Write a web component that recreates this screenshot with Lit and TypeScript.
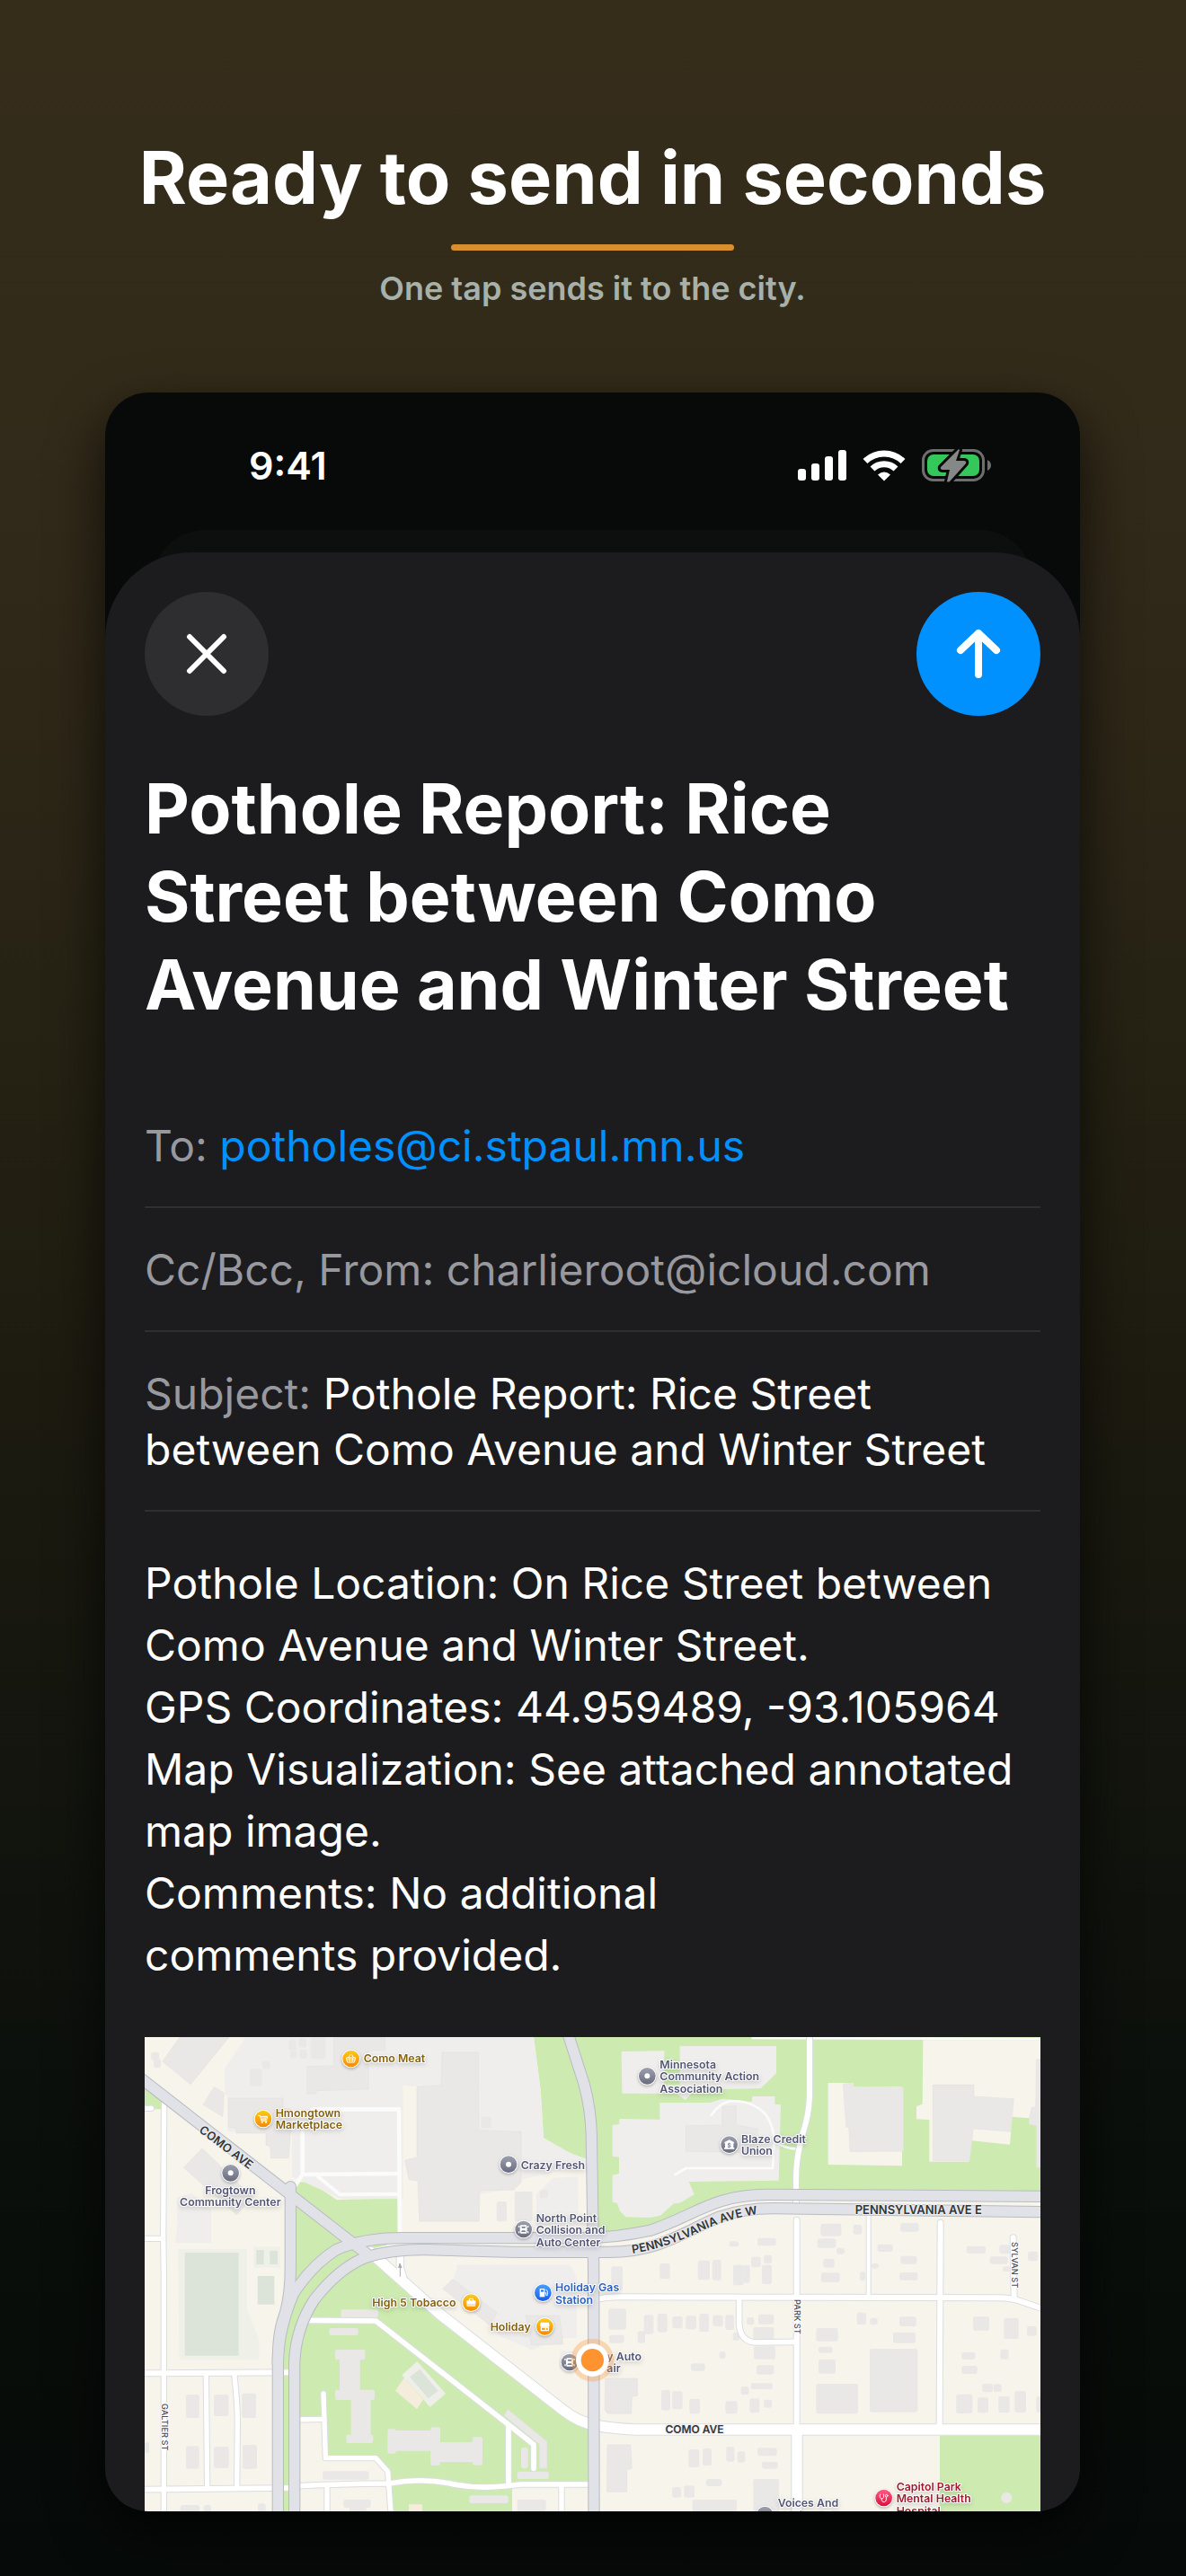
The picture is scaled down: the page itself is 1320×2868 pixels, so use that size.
import { LitElement, html, svg, css } from "lit";
import { customElement } from "lit/decorators.js";

type Box = [number, number, number, number];

/* Map drawing units: three per displayed pixel at full width. */

const footprints: Box[] = [
  // north-west blocks
  [554, 0, 50, 73], [352, 106, 40, 58], [392, 80, 26, 26], [22, 50, 26, 28], [30, 72, 24, 30],
  [481, 8, 24, 36], [514, 4, 26, 30], [486, 46, 22, 24], [518, 42, 24, 30],
  [1124, 266, 33, 38], [1235, 516, 60, 100], [1175, 549, 34, 67], [1319, 510, 28, 28],
  // west blocks
  [138, 1194, 44, 78], [231, 1194, 49, 72], [325, 1190, 47, 82], [138, 1366, 44, 76],
  [231, 1368, 50, 72], [327, 1362, 48, 80], [0, 1354, 15, 36],
  [655, 910, 125, 26], [616, 972, 97, 24], [594, 1450, 155, 28], [119, 1563, 64, 30],
  [197, 1563, 25, 30], [378, 1558, 26, 30], [664, 1544, 91, 28], [684, 1560, 56, 30],
  // park housing
  [636, 1044, 100, 34], [651, 1056, 68, 140], [636, 1178, 132, 34], [689, 1186, 66, 160],
  [673, 1328, 90, 28], [811, 1309, 28, 82], [817, 1314, 170, 68], [955, 1303, 32, 128],
  [955, 1353, 172, 66], [1095, 1335, 33, 95], [1257, 1371, 23, 69], [1244, 1451, 106, 25],
  [1084, 1531, 130, 26], [1244, 1544, 96, 40],
  // east of the avenue
  [1548, 907, 60, 70], [1551, 995, 50, 27], [1667, 928, 32, 64], [1646, 982, 25, 40],
  [1712, 924, 33, 62], [1762, 933, 34, 40], [1807, 931, 35, 45], [1852, 924, 32, 60],
  [1897, 929, 34, 37], [1939, 928, 29, 50], [1964, 987, 22, 27], [1919, 1050, 21, 24],
  [1824, 1090, 47, 25], [1992, 1168, 20, 27], [1725, 1179, 30, 68], [1761, 1183, 35, 60],
  [1819, 1208, 35, 50], [1939, 1216, 40, 42], [1816, 1377, 36, 60], [1863, 1374, 30, 57],
  [1942, 1368, 27, 50], [1979, 1384, 26, 37], [1875, 1476, 52, 24], [1761, 1503, 30, 35],
  [1801, 1498, 35, 40], [1829, 1545, 148, 39],
  [1558, 766, 38, 80], [1720, 756, 34, 52], [1847, 746, 40, 65], [1895, 744, 30, 68],
  [1965, 761, 35, 68], [1952, 682, 32, 18],
  // north-east blocks
  [2257, 623, 69, 42], [2366, 627, 29, 32], [2246, 673, 62, 31], [2310, 704, 27, 21],
  [2266, 740, 37, 30], [2259, 787, 62, 32], [2046, 671, 62, 26], [2025, 734, 32, 35],
  [2067, 728, 27, 28], [2061, 761, 33, 64], [1999, 761, 22, 60], [2447, 692, 51, 25],
  [2524, 621, 61, 29], [2524, 731, 54, 27], [2521, 786, 60, 26], [2427, 756, 24, 17],
  [2388, 784, 18, 30], [2744, 698, 64, 25], [2854, 694, 36, 30], [2822, 733, 60, 25],
  [2865, 766, 25, 17], [2949, 716, 34, 32],
  // east blocks
  [2010, 936, 25, 25], [2049, 926, 52, 33], [2032, 969, 69, 42], [2034, 1033, 72, 43],
  [2043, 1096, 58, 31], [2024, 1156, 73, 20], [1991, 1168, 27, 26], [2020, 1207, 33, 48],
  [2067, 1211, 27, 27], [2242, 972, 73, 44], [2250, 1034, 47, 21], [2250, 1076, 57, 48],
  [2242, 1158, 140, 100], [2378, 920, 31, 40], [2422, 938, 25, 23], [2520, 934, 56, 32],
  [2499, 986, 75, 36], [2421, 1041, 160, 212], [2766, 934, 54, 46], [2869, 938, 49, 70],
  [2946, 966, 32, 32], [2728, 1052, 45, 25], [2728, 1098, 52, 27], [2857, 1043, 28, 33],
  [2797, 1157, 35, 29], [2834, 1159, 27, 26], [2710, 1193, 54, 64], [2781, 1204, 36, 51],
  [2851, 1200, 37, 54], [2905, 1182, 38, 72], [2977, 1200, 15, 54], [2046, 1372, 65, 27],
  [2061, 1418, 53, 24], [2032, 1476, 86, 110],
];

const buildingShapes = [
  "117,0 282,0 154,158 59,82",
  "232,166 265,186 261,266 195,226",
  "632,0 802,0 802,44 747,46 747,174 574,179 572,189 542,189 542,98 632,96",
  "280,204 462,204 462,238 487,240 487,326 481,404 421,404 419,366 405,361 405,321 305,321 303,302 280,301",
  "192,371 362,536 307,593 130,436",
  "909,166 989,161 993,51 1115,51 1115,311 1257,316 1257,486 1232,511 1119,511 1117,616 917,616 912,481 882,476 869,411 909,401",
  "1212,1243 1344,1351 1344,1441 1318,1441 1318,1361 1200,1264",
  "1029,808 1177,921 1152,961 995,841",
  "1272,931 1385,931 1397,1026 1292,1029",
  "1538,1140 1645,1140 1645,1198 1627,1201 1625,1258 1547,1258 1536,1246",
  "1545,1362 1623,1362 1627,1441 1610,1446 1610,1519 1543,1519",
  "2332,156 2365,154 2367,166 2534,168 2534,381 2355,383 2351,301 2342,301",
  "2632,159 2769,159 2769,198 2902,206 2892,316 2767,306 2755,413 2632,413",
  "2977,74 2991,74 2991,436 2977,436 2977,296 2952,291 2952,276 2962,234 2975,234",
  "1807,296 1929,294 1929,231 1975,231 1975,294 2047,306 2047,386 1807,382",
];

const lots = [
  "337,0 862,0 862,541 657,541 492,466 492,321 277,316 277,196 267,194 267,106",
  "862,0 1299,0 1322,176 1332,336 1419,386 1484,410 1484,425 1257,476 1200,511 917,560 912,166 862,161",
  "109,536 157,521 222,576 222,688 102,688 109,626",
  "1307,526 1362,471 1447,466 1447,631 1307,631",
  "1045,760 1419,760 1442,800 1442,1005 1390,1005 1292,1045 1190,1000 1020,850",
  "1387,1048 1450,1048 1450,1110 1387,1110",
  "1720,219 1887,219 1930,206 2027,216 2029,198 2104,198 2104,224 2124,226 2117,479 1817,483 1835,526 1787,554 1767,556 1722,596 1687,603 1607,601 1587,581 1577,554 1562,551 1562,461 1584,456 1584,401 1562,398 1562,294 1585,291 1585,273 1720,275",
  "1592,48 1735,46 1735,160 1787,160 1787,30 2109,30 2109,121 2057,171 1837,176 1805,211 1777,189 1594,188",
];

const parks = [
  "0,170 57,213 57,241 0,241",
  "1299,0 1417,0 1467,156 1490,276 1492,406 1419,408 1419,386 1367,376 1332,336 1322,176",
  "1417,0 2991,0 2991,532 2077,526 1837,590 1687,650 1510,660 1497,476 1490,276 1467,156",
  "445,1584 445,1036 480,900 487,500 507,484 552,484 642,544 845,538 845,660 760,740 1397,1246 1490,1300 1490,1494 1257,1494 1227,1500 1227,1584",
  "2655,1331 2991,1331 2991,1584 2655,1584",
];

const clearings = [
  "2599,10 2991,10 2991,274 2897,266 2889,359 2762,346 2752,416 2620,416 2620,276 2577,274 2577,231 2597,224",
  "2282,153 2367,153 2367,166 2529,166 2529,430 2282,426",
  "517,1282 597,1282 604,1411 772,1411 817,1466 827,1584 517,1584",
  "730,712 850,688 1000,688 850,702 745,722",
];

/* Minor streets: [width, path] */
const streets: [number, string][] = [
  [16, "M65 200 62 666 64 786V1600"],
  [16, "M-9 238H22"],
  [16, "M-9 673H62"],
  [18, "M-9 1123 482 1120"],
  [17, "M-9 1511 482 1506"],
  [17, "M500 1500Q640 1492 817 1491Q917 1472 1017 1490Q1100 1510 1200 1500L1257 1494H1500"],
  [16, "M205 1123 209 1508"],
  [16, "M299 1123Q310 1230 310 1280L308 1508"],
  [16, "M597 1191 604 1406H772L812 1451 823 1600"],
  [16, "M500 1278 600 1276"],
  [16, "M609 1500V1600"],
  [17, "M530 946 772 948 1217 1296 1299 1361V1441"],
  [17, "M1215 1301V1490"],
  [16, "M1392 1500V1600"],
  [18, "M1500 878Q1540 868 1580 868L2850 871Q2890 870 2930 884L3000 908"],
  [17, "M1985 876V960Q1990 1020 2045 1020L2177 1018"],
  [18, "M2177 611V1300"],
  [12, "M2417 580V871"],
  [18, "M2657 620 2654 1300"],
  [18, "M2900 670 2903 871"],
  [18, "M2220 0V200Q2218 260 2198 320Q2175 400 2175 470V570"],
  [34, "M2178 1311V1600"],
  [34, "M752 718 987 926 1397 1246Q1450 1288 1510 1298T1640 1311H3000"],
  [22, "M853 720V770L862 800"],
];

const lanes: [number, string][] = [
  [14, "M560 241H849L852 660"],
  [14, "M852 456 527 459 500 500M527 459V320"],
  [12, "M577 464 652 526 850 524"],
  [8, "M1892 261Q1920 220 1955 214Q2030 210 2075 260Q2102 300 2102 350L2097 438H1807L1772 459"],
  [8, "M2102 350Q2140 372 2177 374"],
  [8, "M2030 3 2991 6"],
];

const highways = [
  "M-20 132 697 690 740 722",
  "M487 500V770Q487 880 460 950Q445 1000 445 1090V1600",
  "M445 1090Q445 980 497 856Q560 760 640 710Q730 671 860 671H1430Q1560 674 1687 646C1830 600 1900 525 2080 526L3000 532",
  "M500 1600V1086Q505 970 567 876Q650 770 740 735Q830 708 940 710L1237 718H1550C1720 718 1800 650 1920 600Q2000 572 2100 572L3000 584",
  "M1410 -20 1417 0 1467 156Q1490 240 1492 330L1499 780 1500 1600",
];

type Tone = "shop" | "place" | "fuel" | "care";

interface Poi {
  tone: Tone;
  glyph: string;
  cx: number;
  cy: number;
  x: number;
  y: number;
  anchor?: "middle";
  lines: string[];
}

const pois: Poi[] = [
  { tone: "shop", glyph: "basket", cx: 689, cy: 72, x: 731, y: 84, lines: ["Como Meat"] },
  { tone: "shop", glyph: "cart", cx: 396, cy: 273, x: 437, y: 267, lines: ["Hmongtown", "Marketplace"] },
  { tone: "place", glyph: "dot", cx: 287, cy: 454, x: 286, y: 525, anchor: "middle", lines: ["Frogtown", "Community Center"] },
  { tone: "place", glyph: "dot", cx: 1678, cy: 130, x: 1720, y: 105, lines: ["Minnesota", "Community Action", "Association"] },
  { tone: "place", glyph: "bank", cx: 1952, cy: 359, x: 1992, y: 354, lines: ["Blaze Credit", "Union"] },
  { tone: "place", glyph: "dot", cx: 1215, cy: 425, x: 1256, y: 440, lines: ["Crazy Fresh"] },
  { tone: "place", glyph: "car", cx: 1265, cy: 642, x: 1307, y: 618, lines: ["North Point", "Collision and", "Auto Center"] },
  { tone: "shop", glyph: "bag", cx: 1090, cy: 887, x: 760, y: 901, lines: ["High 5 Tobacco"] },
  { tone: "fuel", glyph: "pump", cx: 1330, cy: 854, x: 1371, y: 850, lines: ["Holiday Gas", "Station"] },
  { tone: "shop", glyph: "store", cx: 1336, cy: 967, x: 1154, y: 981, lines: ["Holiday"] },
  { tone: "place", glyph: "car", cx: 1419, cy: 1086, x: 1543, y: 1080, lines: ["y Auto", "air"] },
  { tone: "place", glyph: "dot", cx: 2071, cy: 1596, x: 2114, y: 1570, lines: ["Voices And", "Choices For"] },
  { tone: "care", glyph: "scope", cx: 2468, cy: 1539, x: 2510, y: 1515, lines: ["Capitol Park", "Mental Health", "Hospital"] },
];

const glyphs: Record<string, unknown> = {
  dot: svg`<circle r="9" fill="#fff"/>`,
  basket: svg`<g fill="none" stroke="#fff" stroke-width="3" stroke-linejoin="round" stroke-linecap="round"><path d="M-15 -3H15L11 12H-11ZM-8 -4-3 -13M8 -4 3 -13M-13 4H13M-5 -2-4 11M5 -2 4 11"/></g>`,
  cart: svg`<g fill="none" stroke="#fff" stroke-width="3" stroke-linejoin="round" stroke-linecap="round"><path d="M-16 -11H-11L-6 7H12M-10 -8H14L11 3H-7M-4 -7-2 2M3 -7V2M9 -7 8 2"/></g><circle cx="-4" cy="12" r="3" fill="#fff"/><circle cx="9" cy="12" r="3" fill="#fff"/>`,
  bank: svg`<path d="M0 -16 16 -8V-4H-16V-8ZM-14 -4H14V10H17V15H-17V10H-14Z" fill="#fff"/><text class="coin" y="10" text-anchor="middle">$</text>`,
  car: svg`<path d="M-10 -14H10L12 -6V6L10 14H-10L-12 6V-6Z" fill="#fff"/><path d="M-7 -9H7L5 -4H-5ZM-8 9H8L5 4H-5Z" fill="#7b7f90"/><path d="M-15 -12V-6M15 -12V-6M-15 7V13M15 7V13" stroke="#fff" stroke-width="4"/>`,
  bag: svg`<rect x="-15" y="-7" width="30" height="19" rx="3" fill="#fff"/><path d="M-6 -7V-13H6V-7" fill="none" stroke="#fff" stroke-width="3"/><path d="M-15 7H15" stroke="#f9a90a" stroke-width="2"/>`,
  pump: svg`<path d="M-11 -14H6V14H-11Z" fill="#fff"/><path d="M-7 -10H2V-3H-7Z" fill="#2e7cf0"/><path d="M6 0H10V8Q14 12 15 7V-5L10 -11" fill="none" stroke="#fff" stroke-width="3"/>`,
  store: svg`<path d="M-13 -14H13L16 -4Q14 1 10 -1Q5 2 0 -1Q-5 2-10 -1Q-14 1-16 -4Z" fill="#fff"/><path d="M-12 2H12V13H-12Z" fill="none" stroke="#fff" stroke-width="4"/><path d="M3 3V12" stroke="#fff" stroke-width="4"/>`,
  scope: svg`<g fill="none" stroke="#fff" stroke-width="3" stroke-linecap="round"><path d="M-12 -12Q-16 2-7 3Q3 2-1 -12M-7 3Q-8 15 2 14Q10 12 8 -2"/><circle cx="9" cy="-7" r="4"/></g>`,
};

@customElement("report-map")
export class ReportMap extends LitElement {
  static styles = css`
    :host { display: block; }
    .map { display: block; width: 100%; height: auto; background: #f7f4eb; }
    .map text { font-family: Inter, "Liberation Sans", sans-serif; font-weight: 600; font-size: 37px; paint-order: stroke; stroke: #fff; stroke-width: 6px; stroke-linejoin: round; }
    .map .road { font-size: 36px; fill: #343537; stroke: #eceef0; }
    .map .avenue { font-size: 39px; }
    .map .side { font-size: 28px; font-weight: 500; fill: #4c4e52; }
    .map .coin { font-size: 20px; font-weight: 700; fill: #7b7f90; stroke: none; }
    .shop { fill: #85600f; }
    .place { fill: #525674; }
    .fuel { fill: #2b5fc4; }
    .care { fill: #a3172d; }
    .pin { filter: drop-shadow(0 4px 5px #0004); }
    .label { filter: drop-shadow(0 6px 8px #0002); }
  `;

  render() {
    const line = (width: number, color: string) => ([w, d]: [number, string]) =>
      svg`<path d=${d} fill="none" stroke=${color} stroke-width=${w + width} stroke-linejoin="round" stroke-linecap="round"/>`;
    const shape = (color: string) => (points: string) => svg`<polygon points=${points} fill=${color}/>`;
    return html`
      <svg class="map" viewBox="0 0 2991 1584" role="img" aria-label="Map of the pothole location">
        <defs>
          <linearGradient id="shop" x2="0" y2="1"><stop stop-color="#fccb1a"/><stop offset="1" stop-color="#f58a05"/></linearGradient>
          <linearGradient id="place" x2="0" y2="1"><stop stop-color="#9da1ae"/><stop offset="1" stop-color="#686c7e"/></linearGradient>
          <linearGradient id="fuel" x2="0" y2="1"><stop stop-color="#46a0ff"/><stop offset="1" stop-color="#1a5ce4"/></linearGradient>
          <linearGradient id="care" x2="0" y2="1"><stop stop-color="#ff5c86"/><stop offset="1" stop-color="#d8103c"/></linearGradient>
          <path id="avenue-west" d="M1629 723Q1740 705 1850 652T2080 587"/>
        </defs>
        ${parks.map(shape("#cdebb0"))}
        ${clearings.map(shape("#f7f4eb"))}
        ${lots.map(shape("#efeeec"))}
        <path d="M112 708H342V910L382 1010V1078H116ZM364 700H454V770H364Z" fill="#eff0e8"/>
        <path d="M134 720H314V1064H134ZM373 711H398V759H373ZM418 714H444V759H418ZM377 798H433V893H377Z" fill="#dce4da"/>
        <path d="M867 1138 930 1211 909 1243 837 1181ZM882 1561H927V1584H882Z" fill="#f5eddb"/>
        <path d="M910 1083 1005 1191 953 1236 859 1129Z" fill="#efefe9"/>
        <path d="M919 1109 980 1182 947 1207 885 1135Z" fill="#dce4da"/>
        <g stroke="#dddcda" stroke-width="1">
          ${buildingShapes.map(shape("#e9e8e6"))}
        </g>
        ${footprints.map(([x, y, w, h]) => svg`<rect x=${x} y=${y} width=${w} height=${h} rx="7" fill="#e9e8e6"/>`)}
        <circle cx="2878" cy="1539" r="18" fill="#e9e8e6"/>
        ${lanes.map(line(0, "#fbfbfb"))}
        ${streets.map(line(6, "#dcdde0"))}
        ${streets.map(line(0, "#ffffff"))}
        ${highways.map((d) => line(40, "#b9bbc0")([0, d]))}
        ${highways.map((d) => line(34, "#e0e2e7")([0, d]))}
        <path d="M853 800V764M848 770 852 756 858 770Z" fill="#aaa" stroke="#aaa" stroke-width="3"/>

        <text class="road avenue" transform="translate(188 304) rotate(37)" y="14">COMO AVE</text>
        <text class="road avenue"><textPath href="#avenue-west">PENNSYLVANIA AVE W</textPath></text>
        <text class="road avenue" x="2372" y="590">PENNSYLVANIA AVE E</text>
        <text class="road" x="1836" y="1323" text-anchor="middle">COMO AVE</text>
        <text class="side" transform="translate(2895 684) rotate(90)">SYLVAN ST</text>
        <text class="side" transform="translate(2169 876) rotate(90)">PARK ST</text>
        <text class="side" transform="translate(58 1224) rotate(90)">GALTIER ST</text>

        ${pois.map((p) => svg`
          <g class="label">
            <text class=${p.tone} text-anchor=${p.anchor ?? "start"}>
              ${p.lines.map((t, i) => svg`<tspan x=${p.x} y=${p.y + i * 40}>${t}</tspan>`)}
            </text>
          </g>
          <g class="pin" transform="translate(${p.cx} ${p.cy})">
            <circle r="31" fill="#fff"/>
            <circle r="28" fill="url(#${p.tone})"/>
            ${glyphs[p.glyph]}
          </g>`)}

        <circle cx="1495" cy="1079" r="72" fill="#ff9330" fill-opacity=".3"/>
        <circle cx="1495" cy="1079" r="55" fill="#fff"/>
        <circle cx="1495" cy="1079" r="38" fill="#ff9330"/>
      </svg>
    `;
  }
}

@customElement("app-root")
export class AppRoot extends LitElement {
  static styles = css`
    :host {
      display: block;
      font-family: Inter, "Liberation Sans", sans-serif;
      color: #fff;
    }
    * { box-sizing: border-box; margin: 0; }
    .page {
      min-height: 100vh;
      padding: 150px 118px 72px 117px;
      background: linear-gradient(#352d1a 0%, #332b1a 14%, #2e2718 27%, #272314 38%, #1d1b10 54%, #16170f 64%, #0f120d 76%, #0a0f0b 84%, #060a08 100%);
    }
    .intro { display: flex; flex-direction: column; align-items: center; text-align: center; }
    .headline { font-size: 81px; line-height: 96px; font-weight: 700; }
    .rule { width: 315px; height: 7px; margin: 26px 0 18px; border-radius: 4px; background: #d98f2e; }
    .tagline { font-size: 36px; line-height: 48px; font-weight: 600; color: #a7b1a9; }
    .phone {
      margin-top: 92px;
      overflow: hidden;
      border-radius: 48px;
      background: #080a09;
      box-shadow: 0 24px 60px rgba(0, 0, 0, .7);
    }
    .status {
      height: 153px;
      padding: 8px 98px 0 160px;
      display: flex;
      align-items: center;
      justify-content: space-between;
    }
    .clock { font-size: 43px; font-weight: 600; }
    .indicators { display: flex; align-items: center; gap: 18px; }
    .indicators svg { display: block; }
    .behind { height: 60px; margin: 0 52px -35px; border-radius: 84px 84px 0 0; background: #0d0f0e; }
    .sheet { position: relative; padding: 44px 44px 0; border-radius: 96px 96px 0 0; background: #1c1c1e; }
    .actions { display: flex; justify-content: space-between; }
    .action {
      width: 138px;
      height: 138px;
      padding: 0;
      border: 0;
      border-radius: 50%;
      display: grid;
      place-items: center;
      color: #fff;
      background: #2e2e30;
    }
    .send { background: #0091ff; }
    .title { margin: 54px 0 62px; font-size: 77px; line-height: 98px; font-weight: 700; }
    .field { padding: 38px 0 36px; border-bottom: 2px solid #2f2f32; font-size: 48px; line-height: 62px; }
    .muted { color: #98989f; }
    .address { color: #0091ff; text-decoration: none; }
    .body { padding: 45px 0 57px; font-size: 48px; line-height: 69px; }
  `;

  render() {
    return html`
      <main class="page">
        <header class="intro">
          <h1 class="headline">Ready to send in seconds</h1>
          <div class="rule"></div>
          <p class="tagline">One tap sends it to the city.</p>
        </header>

        <section class="phone">
          <div class="status">
            <span class="clock">9:41</span>
            <div class="indicators">
              <svg width="54" height="36" viewBox="0 0 54 36" fill="#fff" aria-label="Signal">
                <rect y="22" width="9" height="13" rx="3"/>
                <rect x="15" y="16" width="9" height="19" rx="3"/>
                <rect x="30" y="8" width="9" height="27" rx="3"/>
                <rect x="45" y="1" width="9" height="34" rx="3"/>
              </svg>
              <svg width="48" height="36" viewBox="0 0 48 36" aria-label="Wi-Fi">
                <g fill="none" stroke="#fff" stroke-width="7">
                  <path d="M3 13.500A30 30 0 0 1 45 13.500"/>
                  <path d="M11 22A18.500 18.500 0 0 1 37 22"/>
                </g>
                <path d="M24 35.500 17 28.500Q24 22.500 31 28.500Z" fill="#fff"/>
              </svg>
              <svg width="78" height="38" viewBox="0 0 78 38" aria-label="Battery charging">
                <rect x="1.500" y="2.500" width="67" height="33" rx="11" fill="none" stroke="#6d6f6e" stroke-width="3"/>
                <rect x="6" y="7" width="58" height="24" rx="7" fill="#34c759"/>
                <path d="M73 13Q77 15 77 19T73 25Z" fill="#6d6f6e"/>
                <path d="M41 1 21 21Q20 24 23 24H31L28 37Q29 38 31 37L49 17Q50 14 47 14H38L42 2Z" fill="#868887" stroke="#080a09" stroke-width="6" stroke-linejoin="round" paint-order="stroke"/>
              </svg>
            </div>
          </div>
          <div class="behind"></div>

          <div class="sheet">
            <div class="actions">
              <button class="action" type="button" aria-label="Close">
                <svg width="46" height="46" viewBox="0 0 46 46" fill="none" stroke="currentColor" stroke-width="6" stroke-linecap="round"><path d="M4 4 42 42M42 4 4 42"/></svg>
              </button>
              <button class="action send" type="button" aria-label="Send">
                <svg width="50" height="58" viewBox="0 0 50 58" fill="none" stroke="currentColor" stroke-width="8" stroke-linecap="round" stroke-linejoin="round"><path d="M25 6V52M5 25 25 6 45 25"/></svg>
              </button>
            </div>

            <h2 class="title">Pothole Report: Rice Street between Como Avenue and Winter Street</h2>

            <p class="field"><span class="muted">To:</span> <a class="address" href="mailto:potholes@ci.stpaul.mn.us">potholes@ci.stpaul.mn.us</a></p>
            <p class="field muted">Cc/Bcc, From: charlieroot@icloud.com</p>
            <p class="field"><span class="muted">Subject:</span> Pothole Report: Rice Street between Como Avenue and Winter Street</p>

            <div class="body">
              <p>Pothole Location: On Rice Street between Como Avenue and Winter Street.</p>
              <p>GPS Coordinates: 44.959489, -93.105964</p>
              <p>Map Visualization: See attached annotated map image.</p>
              <p>Comments: No additional comments&nbsp;provided.</p>
            </div>

            <report-map></report-map>
          </div>
        </section>
      </main>
    `;
  }
}
